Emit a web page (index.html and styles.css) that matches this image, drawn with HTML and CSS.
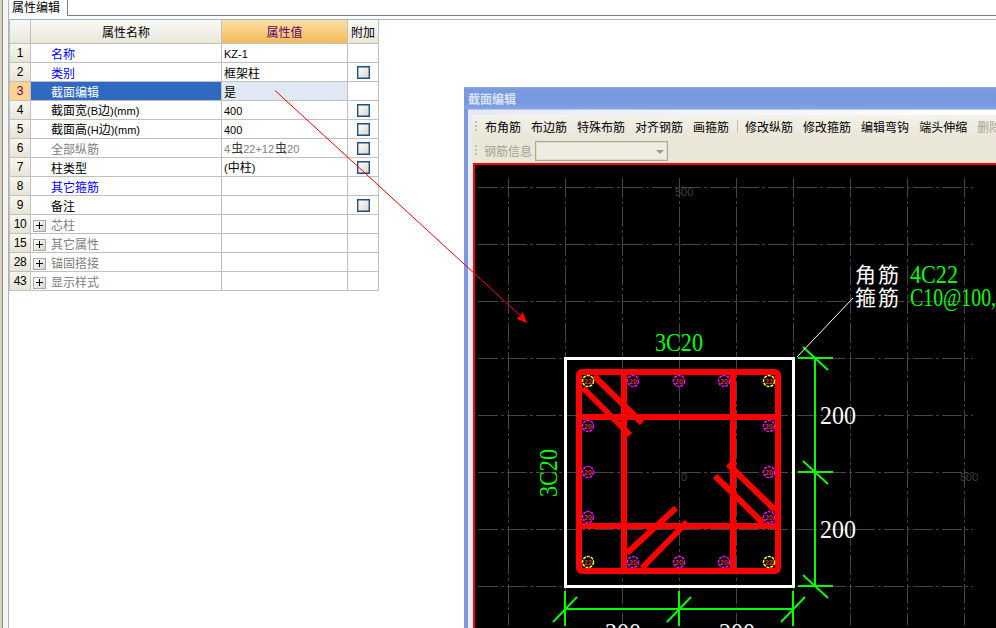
FILE: index.html
```html
<!DOCTYPE html>
<html lang="zh-CN">
<head>
<meta charset="utf-8">
<title>属性编辑</title>
<link rel="stylesheet" href="styles.css">
</head>
<body>
<div class="app">
  <div class="rail"></div>
  <div class="panel">
    <div class="tabs"><div class="tab">属性编辑</div></div>
    <div class="frame">
      <table class="props">
        <colgroup><col class="c1"><col class="c2"><col class="c3"><col class="c4"></colgroup>
        <thead>
          <tr><th></th><th>属性名称</th><th class="active">属性值</th><th>附加</th></tr>
        </thead>
        <tbody>
          <tr><td class="num">1</td><td class="name blue">名称</td><td class="val"><span class="lat">KZ-1</span></td><td></td></tr>
          <tr><td class="num">2</td><td class="name blue">类别</td><td class="val">框架柱</td><td class="chk"><span class="box"></span></td></tr>
          <tr class="sel"><td class="num">3</td><td class="name">截面编辑</td><td class="val">是</td><td></td></tr>
          <tr><td class="num">4</td><td class="name">截面宽<span class="lat">(B</span>边<span class="lat">)(mm)</span></td><td class="val"><span class="lat">400</span></td><td class="chk"><span class="box"></span></td></tr>
          <tr><td class="num">5</td><td class="name">截面高<span class="lat">(H</span>边<span class="lat">)(mm)</span></td><td class="val"><span class="lat">400</span></td><td class="chk"><span class="box"></span></td></tr>
          <tr><td class="num">6</td><td class="name grey">全部纵筋</td><td class="val grey"><span class="lat">4</span><span class="steel">虫</span><span class="lat">22+12</span><span class="steel">虫</span><span class="lat">20</span></td><td class="chk"><span class="box"></span></td></tr>
          <tr><td class="num">7</td><td class="name">柱类型</td><td class="val"><span class="lat">(</span>中柱<span class="lat">)</span></td><td class="chk"><span class="box"></span></td></tr>
          <tr><td class="num">8</td><td class="name blue">其它箍筋</td><td class="val"></td><td></td></tr>
          <tr><td class="num">9</td><td class="name">备注</td><td class="val"></td><td class="chk"><span class="box"></span></td></tr>
          <tr><td class="num">10</td><td class="name grey group"><span class="plus"></span>芯柱</td><td></td><td></td></tr>
          <tr><td class="num">15</td><td class="name grey group"><span class="plus"></span>其它属性</td><td></td><td></td></tr>
          <tr><td class="num">28</td><td class="name grey group"><span class="plus"></span>锚固搭接</td><td></td><td></td></tr>
          <tr><td class="num">43</td><td class="name grey group"><span class="plus"></span>显示样式</td><td></td><td></td></tr>
        </tbody>
      </table>
    </div>
  </div>
</div>

<section class="window">
  <header class="titlebar">截面编辑</header>
  <div class="client">
    <div class="bar bar-main">
      <span class="grip"></span>
      <span class="tool">布角筋</span><span class="tool">布边筋</span><span class="tool">特殊布筋</span><span class="tool">对齐钢筋</span><span class="tool">画箍筋</span>
      <span class="sep"></span>
      <span class="tool">修改纵筋</span><span class="tool">修改箍筋</span><span class="tool">编辑弯钩</span><span class="tool">端头伸缩</span><span class="tool off">删除</span>
    </div>
    <div class="bar bar-sub">
      <span class="grip"></span>
      <span class="tool off">钢筋信息</span>
      <span class="combo"><span class="caret"></span></span>
    </div>
    <div class="canvas">
      <svg class="cad" width="521" height="463" viewBox="475 165 521 463">
        <path class="grid" d="M478 187.5H973M478 244.5H973M478 301.5H973M478 358.5H973M478 415.5H973M478 472.5H973M478 529.5H973M478 586.5H973"/>
        <path class="grid" d="M508.5 178V625M565.5 178V625M622.5 178V625M679.5 178V625M736.5 178V625M793.5 178V625M850.5 178V625M907.5 178V625M964.5 178V625"/>
        <text class="axis" x="675" y="196">500</text>
        <text class="axis" x="681" y="481">0</text>
        <text class="axis" x="960" y="481">500</text>

        <rect class="concrete" x="565.5" y="358.5" width="228" height="228"/>
        <rect class="bar-red" x="579" y="372" width="199" height="199" rx="3"/>
        <path class="bar-red" d="M624 372V571M733 372V571M579 417H778M579 526H778"/>
        <path class="bar-red" d="M594 376L642 423M583 388L630 435M728 464L775 510M715 476L763 523M676 508L627 553M687 522L642 568"/>

        <g class="rebar main">
          <circle cx="588" cy="381" r="5.5"/><circle cx="769" cy="381" r="5.5"/>
          <circle cx="588" cy="562" r="5.5"/><circle cx="769" cy="562" r="5.5"/>
        </g>
        <g class="rebar side">
          <circle cx="633" cy="381" r="5.5"/><circle cx="679" cy="381" r="5.5"/><circle cx="724" cy="381" r="5.5"/>
          <circle cx="633" cy="562" r="5.5"/><circle cx="679" cy="562" r="5.5"/><circle cx="724" cy="562" r="5.5"/>
          <circle cx="588" cy="426" r="5.5"/><circle cx="588" cy="472" r="5.5"/><circle cx="588" cy="517" r="5.5"/>
          <circle cx="769" cy="426" r="5.5"/><circle cx="769" cy="472" r="5.5"/><circle cx="769" cy="517" r="5.5"/>
        </g>
        <g class="rebar-label">
          <text x="588" y="384">22</text><text x="769" y="384">22</text><text x="588" y="565">22</text><text x="769" y="565">22</text>
          <text x="633" y="384">20</text><text x="679" y="384">20</text><text x="724" y="384">20</text>
          <text x="633" y="565">20</text><text x="679" y="565">20</text><text x="724" y="565">20</text>
          <text x="588" y="429">20</text><text x="588" y="475">20</text><text x="588" y="520">20</text>
          <text x="769" y="429">20</text><text x="769" y="475">20</text><text x="769" y="520">20</text>
        </g>

        <path class="dim" d="M815 358V586M798 358H833M803 347L828 370M798 472H833M803 461L828 484M798 586H833M803 575L828 598"/>
        <path class="dim" d="M565 609H793M565 591V626M679 591V626M793 591V626M553 622L577 597M667 622L691 597M781 622L805 597"/>
        <path class="leader" d="M797 357L853 298"/>

        <text class="cad-text green" x="655" y="351" textLength="48" lengthAdjust="spacingAndGlyphs">3C20</text>
        <text class="cad-text green" transform="translate(557 497) rotate(-90)" textLength="48" lengthAdjust="spacingAndGlyphs">3C20</text>
        <text class="cad-text white" x="820" y="424" textLength="36" lengthAdjust="spacingAndGlyphs">200</text>
        <text class="cad-text white" x="820" y="538" textLength="36" lengthAdjust="spacingAndGlyphs">200</text>
        <text class="cad-text white" x="605" y="641" textLength="36" lengthAdjust="spacingAndGlyphs">200</text>
        <text class="cad-text white" x="719" y="641" textLength="36" lengthAdjust="spacingAndGlyphs">200</text>
        <text class="cad-cjk" x="855" y="282">角筋</text>
        <text class="cad-cjk" x="855" y="305">箍筋</text>
        <text class="cad-text green" x="910" y="283" textLength="48" lengthAdjust="spacingAndGlyphs">4C22</text>
        <text class="cad-text green" x="910" y="306" textLength="86" lengthAdjust="spacingAndGlyphs">C10@100,</text>
      </svg>
    </div>
  </div>
</section>

<svg class="arrow" width="996" height="628" viewBox="0 0 996 628">
  <path class="arrow-line" d="M275 90.5L524 319"/>
  <path class="arrow-head" d="M523 312L517 319L527 323Z"/>
</svg>
</body>
</html>
```
FILE: styles.css
```css
* { box-sizing: border-box; }
html, body { margin: 0; padding: 0; }
body {
  position: relative;
  width: 996px;
  height: 628px;
  overflow: hidden;
  background: #fff;
  font: 12px "Noto Sans CJK SC", sans-serif;
  color: #000;
}

/* property panel */
.app { display: flex; height: 628px; }
.rail {
  width: 8px;
  background: linear-gradient(90deg, #d8d4c2 0, #d8d4c2 2px, #8a8a80 2px, #8a8a80 3px, #f6f4ec 3px);
}
.panel { flex: 1; border-left: 1px solid #9fb4cf; min-width: 0; }
.tabs { height: 16px; border-bottom: 1px solid #808080; display: flex; }
.tab {
  width: 59px;
  height: 16px;
  margin-bottom: -1px;
  padding-left: 3px;
  background: #fff;
  border-right: 1px solid #808080;
  font-size: 12px;
  line-height: 14px;
  overflow: hidden;
}
.frame { margin-top: 3px; border-top: 1px solid #9fb4cf; }
.props {
  table-layout: fixed;
  border-collapse: separate;
  border-spacing: 0;
  width: 370px;
  border-left: 1px solid #c0c0c0;
}
.c1 { width: 21px; }
.c2 { width: 191px; }
.c3 { width: 126px; }
.c4 { width: 31px; }
.props th, .props td {
  padding: 0;
  border-right: 1px solid #c0c0c0;
  border-bottom: 1px solid #c0c0c0;
  font-weight: 400;
  font-size: 12px;
  line-height: 15px;
  white-space: nowrap;
  overflow: hidden;
}
.props th {
  height: 24px;
  text-align: center;
  background: linear-gradient(#fafaf5, #e9e7da);
}
.props th.active {
  color: #660066;
  background: linear-gradient(#fcdfa6, #f2bb5b);
}
.props td { height: 19px; }
.props td.num {
  text-align: center;
  font-family: "Liberation Sans", sans-serif;
  font-size: 12px;
  letter-spacing: -0.4px;
  background: linear-gradient(#f8f7f0, #e6e4d6);
}
.props td.name { padding-left: 20px; }
.props td.group { padding-left: 2px; }
.props td.val { padding-left: 2px; }
.props td.chk { text-align: center; font-size: 0; line-height: 0; }
.blue { color: #0000ff; }
.props td.grey { color: #808080; }
.sel td.num { color: #660066; background: #ffd491; }
.sel td.name { background: #3069c2; color: #fff; }
.sel td.val { background: #dfe8f3; }
.lat {
  font-family: "Liberation Sans", sans-serif;
  font-size: 11px;
}
.steel { margin: 0 0 0 1px; color: #333; }
.box {
  display: inline-block;
  width: 13px;
  height: 13px;
  border: 1px solid #1c5180;
  box-shadow: inset 0 0 0 0.4px #1c5180;
  background: linear-gradient(135deg, #fff, #d8d8d0);
  vertical-align: middle;
}
.plus {
  display: inline-block;
  position: relative;
  width: 13px;
  height: 12px;
  margin-right: 5px;
  border: 1px solid #a8a8a8;
  background: linear-gradient(135deg, #fff, #d4d4cc);
  vertical-align: -2px;
}
.plus::before, .plus::after { content: ""; position: absolute; background: #000; }
.plus::before { left: 2px; top: 4px; width: 7px; height: 1px; }
.plus::after { left: 5px; top: 1px; width: 1px; height: 7px; }

/* floating section editor window */
.window {
  position: absolute;
  left: 464px;
  top: 87px;
  width: 532px;
  height: 541px;
  padding: 0 0 0 4px;
  background: #8098dc;
  display: flex;
  flex-direction: column;
  overflow: hidden;
}
.titlebar {
  margin-left: -4px;
  height: 22px;
  padding: 4px 0 0 4px;
  background: linear-gradient(#8ea8e4 0, #7b9ae0 2px, #7698df 16px, #82a4ea);
  color: #dbe5f8;
  font-weight: 700;
  font-size: 12px;
  line-height: 15px;
}
.client {
  flex: 1;
  padding: 5px 0 0 4px;
  background: linear-gradient(90deg, #e6e9f6, #fff);
  display: flex;
  flex-direction: column;
  min-height: 0;
  border-top: 1px solid #b9c6e6;
}
.bar { display: flex; align-items: center; white-space: nowrap; overflow: hidden; flex: none; }
.bar-main {
  height: 23px;
  padding-left: 3px;
  gap: 10px;
  background: linear-gradient(#f4f2ea, #efece0 50%, #eae7d8);
}
.bar-sub {
  height: 25px;
  padding-left: 3px;
  background: #eae7d8;
}
.grip {
  flex: none;
  width: 2px;
  height: 11px;
  margin-right: -2px;
  background: repeating-linear-gradient(#c2bfae 0, #c2bfae 2px, transparent 2px, transparent 4px);
}
.tool { flex: none; font-size: 12px; line-height: 15px; }
.bar-sub .tool { margin-left: 9px; }
.off { color: #a3a295; }
.sep { flex: none; width: 1px; height: 13px; margin: 0 -3px 0 -2px; background: #c5c2b0; }
.combo {
  position: relative;
  flex: none;
  width: 133px;
  height: 20px;
  margin-left: 3px;
  border: 1px solid #aca899;
  box-shadow: inset 0 0 0 1px #dedbc9;
  background: #efede1;
}
.caret {
  position: absolute;
  right: 3px;
  top: 8px;
  border: 4px solid transparent;
  border-top-color: #9a9a90;
  border-bottom: 0;
}
.canvas {
  flex: 1;
  min-height: 0;
  margin-left: 1px;
  border: 2px solid #ff0000;
  border-right: 0;
  border-bottom: 0;
  background: #000;
  overflow: hidden;
}
.cad { display: block; }
.grid { fill: none; stroke: #444; stroke-width: 1; stroke-dasharray: 20 3 3 3; }
.axis { fill: #3f3f3f; font: 11px "Liberation Sans", sans-serif; }
.concrete { fill: none; stroke: #fff; stroke-width: 3; }
.bar-red { fill: none; stroke: #ff0000; stroke-width: 6; }
.rebar circle { fill: #000; stroke-width: 1.5; stroke-dasharray: 3 1; }
.rebar.main circle { stroke: #ffff00; }
.rebar.side circle { stroke: #ff00ff; }
.rebar-label text { fill: #d04040; font: 700 7px "Liberation Sans", sans-serif; text-anchor: middle; }
.dim { fill: none; stroke: #00ff00; stroke-width: 2; }
.leader { fill: none; stroke: #fff; stroke-width: 1; }
.cad-text { font: 25px "Liberation Serif", serif; }
.green { fill: #00ff00; }
.white { fill: #fff; }
.cad-cjk { fill: #fff; font: 21px "Noto Sans CJK SC", sans-serif; letter-spacing: 2px; }

/* annotation arrow over everything */
.arrow { position: absolute; left: 0; top: 0; pointer-events: none; }
.arrow-line { fill: none; stroke: #ff0000; stroke-width: 1; }
.arrow-head { fill: #ff0000; }
```
